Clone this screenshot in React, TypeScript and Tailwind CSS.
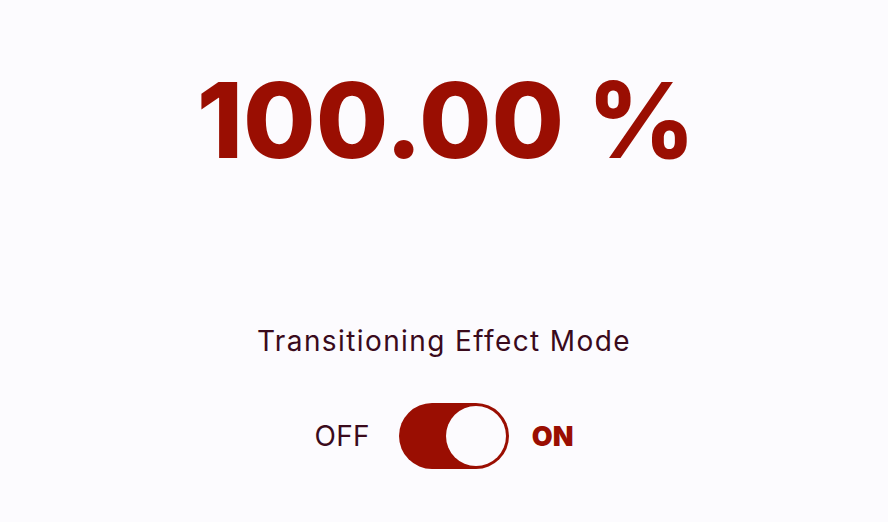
import React from "react";

export default function App() {
  return (
    <div className="w-[888px] h-[522px] bg-[#fcfbfe] flex flex-col items-center [font-family:Inter,sans-serif]">
      <div className="mt-[54px] h-[130px] flex items-center text-[105px] leading-none font-extrabold text-[#9a0e02] pl-[4px]">
        100.00 %
      </div>
      <div className="mt-[143px] text-[28px] leading-none tracking-[1.4px] text-[#3a0a1c]">
        Transitioning Effect Mode
      </div>
      <div className="mt-[48px] flex items-center">
        <span className="text-[28px] leading-none tracking-[0.3px] text-[#3a0a1c]">OFF</span>
        <div className="ml-[29px] w-[110px] h-[66px] rounded-full bg-[#9a0e02] p-[3px] flex justify-end items-center">
          <div className="w-[60px] h-[60px] rounded-full bg-[#fcfbfe]" />
        </div>
        <span className="ml-[23px] text-[27px] leading-none font-black text-[#9a0e02]">ON</span>
      </div>
    </div>
  );
}
